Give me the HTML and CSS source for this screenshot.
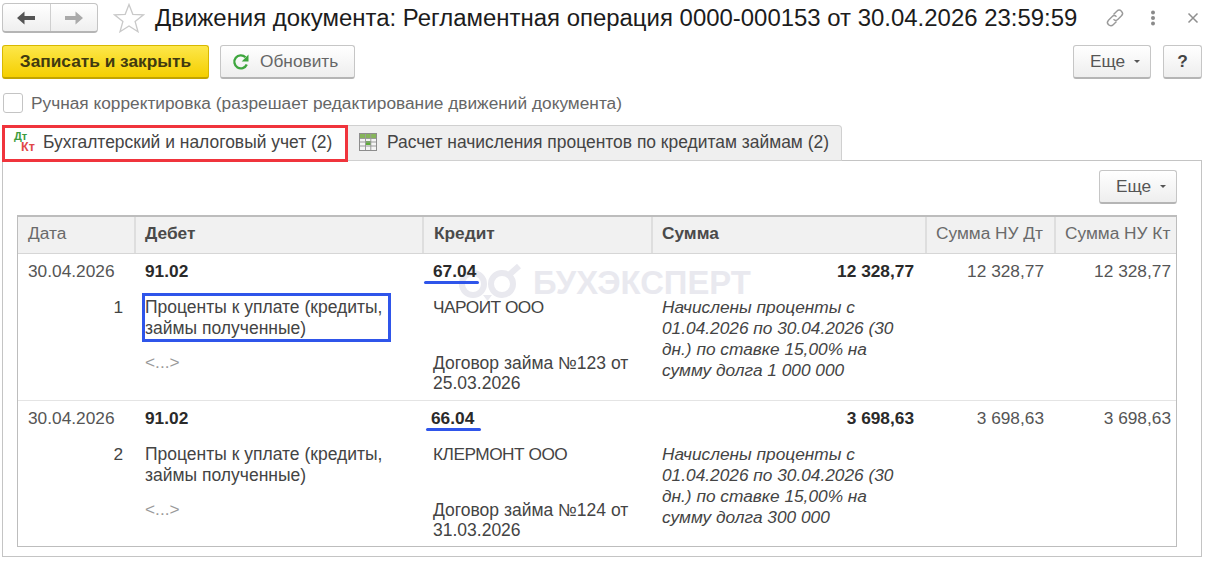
FILE: index.html
```html
<!DOCTYPE html>
<html lang="ru">
<head>
<meta charset="utf-8">
<title>Движения документа</title>
<link rel="stylesheet" href="styles.css">
</head>
<body>
<div class="page">
  <header class="titlebar">
    <div class="nav">
      <button class="nav-btn nav-back" aria-label="Назад"><svg width="18" height="14" viewBox="0 0 18 14"><path d="M0 7 7.500 0.500V5H18V9H7.500V13.500Z" fill="#555"/></svg></button>
      <button class="nav-btn" aria-label="Вперед"><svg width="18" height="14" viewBox="0 0 18 14"><path d="M18 7 10.500 0.500V5H0V9H10.500V13.500Z" fill="#aaa"/></svg></button>
    </div>
    <svg class="star" width="32" height="30" viewBox="0 0 32 30"><path d="M16 1.500 19.800 11.300 30.500 11.800 22.100 18.500 25 28.700 16 22.900 7 28.700 9.900 18.500 1.500 11.800 12.200 11.300Z" fill="#fff" stroke="#c9c9c9" stroke-width="1.300"/></svg>
    <h1 class="title">Движения документа: Регламентная операция 0000-000153 от 30.04.2026 23:59:59</h1>
    <div class="win-icons">
      <svg width="22" height="22" viewBox="0 0 22 22" fill="none" stroke="#9a9a9a" stroke-width="1.400"><path d="M9.500 7.500 12.800 4.200a3.200 3.200 0 0 1 4.700 4.600L14 12.300a3.200 3.200 0 0 1-4.500 0"/><path d="M12.500 14.500 9.200 17.800a3.200 3.200 0 0 1-4.700-4.600L8 9.700a3.200 3.200 0 0 1 4.500 0"/></svg>
      <svg width="6" height="16" viewBox="0 0 6 16" fill="#8a8a8a"><circle cx="3" cy="2.500" r="2"/><circle cx="3" cy="8" r="2"/><circle cx="3" cy="13.500" r="2"/></svg>
      <svg class="win-close" width="12" height="12" viewBox="0 0 12 12" stroke="#8f8f8f" stroke-width="1.500"><path d="M1.500 1.500 10.500 10.500M10.500 1.500 1.500 10.500"/></svg>
    </div>
  </header>

  <div class="toolbar">
    <button class="btn btn-primary">Записать и закрыть</button>
    <button class="btn btn-refresh"><svg width="18" height="18" viewBox="0 0 18 18" fill="none"><path d="M14.800 11.500A6.500 6.500 0 1 1 13.500 4.300" stroke="#3ea63e" stroke-width="2.300"/><path d="M16.500 1.500V8.500H9.700Z" fill="#3ea63e"/></svg>Обновить</button>
    <div class="toolbar-right">
      <button class="btn btn-more">Еще<span class="caret"></span></button>
      <button class="btn btn-help">?</button>
    </div>
  </div>

  <label class="check-row"><span class="checkbox"></span>Ручная корректировка (разрешает редактирование движений документа)</label>

  <div class="tabs">
    <div class="tab tab-active"><span class="dtkt"><span class="dt">Дт</span><span class="kt">Кт</span></span>Бухгалтерский и налоговый учет (2)</div>
    <div class="tab tab-other">
      <svg width="18" height="18" viewBox="0 0 18 18"><rect x="0.500" y="0.500" width="17" height="17" fill="#f4f4f4" stroke="#8d8d8d"/><rect x="1" y="1" width="16" height="4" fill="#86b55a"/><rect x="7" y="8" width="5" height="4" fill="#5fae3a"/><path d="M1 5.500H17M1 9H17M1 13H17M6.500 1V17M11.800 1V17" stroke="#9a9a9a" stroke-width="1"/></svg>
      Расчет начисления процентов по кредитам займам (2)</div>
  </div>

  <section class="panel">
    <div class="panel-bar"><button class="btn btn-more">Еще<span class="caret"></span></button></div>
    <div class="grid">
      <div class="row head">
        <div class="th">Дата</div>
        <div class="th strong">Дебет</div>
        <div class="th strong">Кредит</div>
        <div class="th strong">Сумма</div>
        <div class="th">Сумма НУ Дт</div>
        <div class="th">Сумма НУ Кт</div>
      </div>
      <div class="row body first">
        <div class="td">
          <div class="l1">30.04.2026</div>
          <div class="num">1</div>
        </div>
        <div class="td">
          <div class="l1 b">91.02</div>
          <div class="sub wide">Проценты к уплате (кредиты, займы полученные)</div>
          <div class="dots">&lt;...&gt;</div>
        </div>
        <div class="td">
          <div class="l1 b">67.04</div>
          <div class="sub one">ЧАРОИТ ООО</div>
          <div class="sub contract">Договор займа №123 от 25.03.2026</div>
        </div>
        <div class="td">
          <div class="l1 b right">12 328,77</div>
          <div class="sub it">Начислены проценты с 01.04.2026 по 30.04.2026 (30 дн.) по ставке 15,00% на сумму долга 1 000 000</div>
        </div>
        <div class="td"><div class="l1 right">12 328,77</div></div>
        <div class="td"><div class="l1 right">12 328,77</div></div>
      </div>
      <div class="row body">
        <div class="td">
          <div class="l1">30.04.2026</div>
          <div class="num">2</div>
        </div>
        <div class="td">
          <div class="l1 b">91.02</div>
          <div class="sub wide">Проценты к уплате (кредиты, займы полученные)</div>
          <div class="dots">&lt;...&gt;</div>
        </div>
        <div class="td">
          <div class="l1 b shift">66.04</div>
          <div class="sub one">КЛЕРМОНТ ООО</div>
          <div class="sub contract">Договор займа №124 от 31.03.2026</div>
        </div>
        <div class="td">
          <div class="l1 b right">3 698,63</div>
          <div class="sub it">Начислены проценты с 01.04.2026 по 30.04.2026 (30 дн.) по ставке 15,00% на сумму долга 300 000</div>
        </div>
        <div class="td"><div class="l1 right">3 698,63</div></div>
        <div class="td"><div class="l1 right">3 698,63</div></div>
      </div>
    </div>
  </section>

  <div class="watermark">
    <svg width="62" height="38" viewBox="0 0 62 38" fill="none" stroke="#e9e9ef" stroke-width="6"><circle cx="14" cy="20" r="11"/><circle cx="43" cy="20" r="11"/><path d="M50 11 60 2"/><path d="M24 31 28.500 37 33 31" fill="#e9e9ef" stroke="none"/></svg>
    <span>БУХЭКСПЕРТ</span>
  </div>
  <div class="mark mark-red"></div>
  <div class="mark mark-blue"></div>
  <div class="mark line line-1"></div>
  <div class="mark line line-2"></div>
</div>
</body>
</html>
```

FILE: styles.css
```css
* { box-sizing: border-box; }
html, body { margin: 0; padding: 0; background: #fff; }
body { font-family: "Liberation Sans", Arial, sans-serif; color: #444; font-size: 17.300px; overflow: hidden; }
button { font: inherit; color: inherit; }
.page { position: relative; width: 1205px; height: 561px; padding: 3px 3px 0 2px; }

.titlebar { display: flex; align-items: center; height: 30px; }
.nav { display: flex; width: 96px; height: 30px; border: 1px solid #c4c4c4; border-bottom: 2px solid #b5b5b5; border-radius: 4px; background: linear-gradient(#fff, #efefef); }
.nav-btn { flex: 1; border: 0; padding: 0; background: none; display: flex; align-items: center; justify-content: center; }
.nav-back { border-right: 1px solid #cfcfcf; }
.star { margin-left: 15px; flex: none; }
.title { margin: 0 0 0 10px; font-size: 23.950px; font-weight: 400; color: #1c1c1c; white-space: nowrap; line-height: 30px; }
.win-icons { margin-left: auto; display: flex; align-items: center; gap: 24px; padding-right: 3px; }
.win-close { margin-left: 7px; }

.toolbar { display: flex; align-items: stretch; height: 34px; margin-top: 12px; }
.btn { height: 34px; border: 1px solid #c6c6c6; border-bottom: 2px solid #b5b5b5; border-radius: 3px; background: linear-gradient(#ffffff, #eeeeee); padding: 0; display: inline-flex; align-items: center; justify-content: center; color: #555; white-space: nowrap; }
.btn-primary { width: 207px; background: linear-gradient(#fde74a, #f5cf00); border-color: #d8b800; border-bottom-color: #c2a400; font-weight: 700; color: #403a10; }
.btn-refresh { width: 135px; margin-left: 11px; gap: 10px; color: #666; justify-content: flex-start; padding-left: 11px; }
.toolbar-right { margin-left: auto; display: flex; gap: 12px; }
.btn-more { width: 78px; padding-left: 6px; }
.btn-help { width: 39px; font-weight: 700; color: #444; }
.caret { width: 0; height: 0; border: 3px solid transparent; border-top: 3px solid #555; border-bottom: 0; margin-left: 9px; }

.check-row { display: flex; align-items: center; height: 20px; margin-top: 14px; padding-left: 1px; gap: 8px; color: #666; }
.checkbox { width: 20px; height: 20px; border: 1px solid #c4c4c4; border-radius: 3px; background: #fff; flex: none; }

.tabs { display: flex; height: 36px; margin-top: 12px; align-items: flex-start; }
.tab { display: flex; align-items: center; white-space: nowrap; padding-bottom: 2px; font-size: 17.450px; }
.tab-active { width: 345px; height: 36px; padding-left: 10px; background: #fff; }
.dtkt { position: relative; width: 31px; height: 24px; flex: none; font-size: 11px; font-weight: 700; line-height: 1; }
.dt { position: absolute; left: 2px; top: 1px; color: #3d9b3d; }
.kt { position: absolute; left: 9px; top: 11px; color: #e04848; font-size: 12.500px; }
.tab-other { width: 494px; height: 36px; margin-left: 1px; padding-left: 11px; gap: 10px; background: #efefef; border: 1px solid #d0d0d0; border-left: 0; border-radius: 0 4px 0 0; }

.panel { height: 397px; margin-top: -1px; border: 1px solid #c4c4c4; padding: 0 24px 0 14px; background: #fff; }
.panel-bar { display: flex; justify-content: flex-end; height: 54px; padding-top: 9px; }
.grid { border: 1px solid #bdbdbd; border-top-width: 2px; height: 332px; display: flex; flex-direction: column; }
.row { position: relative; z-index: 1; display: grid; grid-template-columns: 116px 288px 229px 274px 129px 1fr; }
.head { height: 37px; background: #f1f1f1; border-bottom: 1px solid #d6d6d6; }
.th { display: flex; align-items: center; padding: 0 0 2px 9px; color: #6a6a6a; border-left: 2px solid #dedede; white-space: nowrap; }
.th:first-child { border-left: 0; padding-left: 10px; }
.th:nth-child(3) { padding-left: 10px; }
.th.strong { font-weight: 700; color: #4a4a4a; }
.body { height: 146px; }
.first { height: 148px; border-bottom: 1px solid #e4e4e4; }
.td { padding: 7px 5px 0 11px; line-height: 21px; }
.td:first-child { padding-left: 10px; padding-right: 11px; }
.td:nth-child(4) { padding: 7px 11px 0 11px; }
.td:nth-child(5) { padding-right: 10px; }
.l1 { height: 21px; color: #555; white-space: nowrap; }
.b { font-weight: 700; color: #2a2a2a; }
.right { text-align: right; }
.shift { margin-left: -2px; }
.num { margin-top: 15px; text-align: right; }
.sub { margin-top: 15px; }
.wide { font-size: 17.500px; }
.one { height: 21px; letter-spacing: -0.500px; }
.contract { margin-top: 35px; font-size: 17.500px; line-height: 20px; }
.it { font-style: italic; }
.dots { margin-top: 13px; color: #9a9a9a; }

.watermark { position: absolute; left: 459px; top: 264px; display: flex; align-items: center; gap: 12px; height: 38px; color: #e9e9ef; font-size: 32.800px; font-weight: 700; }
.mark { position: absolute; z-index: 2; }
.mark-red { left: 2px; top: 125px; width: 346px; height: 37px; border: 3px solid #f0343c; }
.mark-blue { left: 142px; top: 293px; width: 249px; height: 49px; border: 3px solid #2f55ea; }
.line { height: 3px; border-radius: 2px; background: #2f55ea; width: 55px; }
.line-1 { left: 424px; top: 281px; }
.line-2 { left: 426px; top: 428px; }
```
